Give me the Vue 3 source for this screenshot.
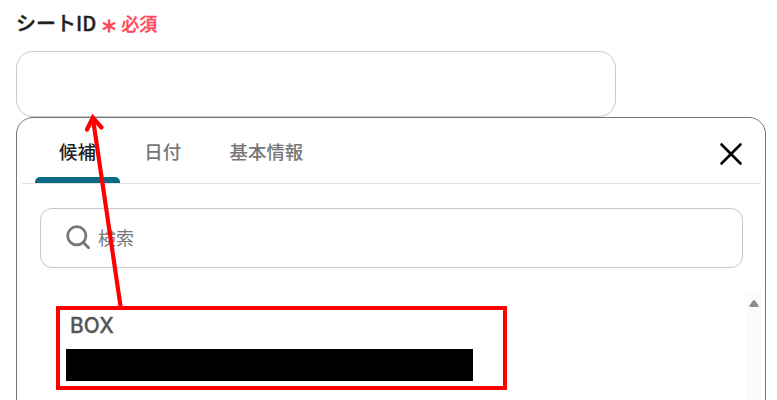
<template>
  <div class="page">
    <div class="label">
      <span class="name">シートID</span>
      <svg class="star" width="14" height="16" viewBox="0 0 14 16">
        <path d="M7 1.5V14.5M1 4.8L13 11.2M13 4.8L1 11.2" />
      </svg>
      <span class="required">必須</span>
    </div>
    <input v-model="sheetId" class="field" type="text" />
    <div class="panel">
      <div class="tabs">
        <button
          v-for="tab in tabs"
          :key="tab"
          class="tab"
          :class="{ active: tab === current }"
          @click="current = tab"
        >{{ tab }}</button>
        <button class="close">
          <svg width="24" height="24" viewBox="0 0 24 24"><path d="M2.5 2.5L21.5 21.5M21.5 2.5L2.5 21.5" /></svg>
        </button>
      </div>
      <div class="search">
        <svg width="26" height="26" viewBox="0 0 26 26">
          <circle cx="11.8" cy="10.8" r="9.1" />
          <path d="M18.3 17.5L23.6 22.8" />
        </svg>
        <input v-model="query" type="text" placeholder="検索" />
      </div>
      <div class="list">
        <div class="item">
          <div class="title">BOX</div>
          <div class="mask"></div>
        </div>
        <div class="scroll">
          <svg width="10" height="8" viewBox="0 0 10 8"><path d="M3.8.8Q5-.4 6.2.8L9.2 5Q10 7 8.5 7H1.5Q0 7 .8 5Z" /></svg>
        </div>
      </div>
    </div>
    <svg class="arrow" width="777" height="400" viewBox="0 0 777 400">
      <path d="M120.8 308L92.8 117.5M87 129.5L92.8 117.5L101.5 127.5" />
    </svg>
    <div class="frame"></div>
  </div>
</template>
<script setup>
import { ref } from 'vue'
const tabs = ['候補', '日付', '基本情報']
const current = ref('候補')
const sheetId = ref('')
const query = ref('')
</script>
<style>
body { margin: 0; background: #fff; overflow: hidden; }
</style>
<style scoped>
.page { position: relative; box-sizing: border-box; width: 777px; height: 400px; padding-left: 16px; overflow: hidden; font-family: Inter, "Noto Sans CJK JP", sans-serif; }
.page * { box-sizing: border-box; }
button, input { font: inherit; border: 0; padding: 0; margin: 0; background: none; outline: none; }
svg { display: block; fill: none; flex: none; }
.label { display: flex; align-items: center; height: 51px; padding-bottom: 5px; }
.name { margin-bottom: 2px; font-size: 20px; font-weight: 500; font-family: "Noto Sans CJK JP", sans-serif; color: #222; -webkit-text-stroke: 0.4px #222; }
.star { margin: 5px 5px 0 6px; stroke: #ff4658; stroke-width: 2.4; }
.required { font-size: 18px; font-weight: 500; color: #ff4658; -webkit-text-stroke: 0.3px #ff4658; }
.field { display: block; width: 600px; height: 66px; border: 1px solid #c8c8c8; border-radius: 17px; padding: 0 16px; }
.panel { width: 750px; height: 320px; border: 1px solid #777; border-radius: 17px 17px 0 0; background: #fff; padding: 0 4px 0 5px; }
.tabs { display: flex; height: 66px; border-bottom: 1px solid #e2e2e2; padding: 0 18px 0 13px; }
.tab { position: relative; padding: 0 24.5px 0 24px; font-size: 18.4px; font-weight: 500; color: #777; height: 66px; }
.tab.active { color: #222; }
.tab.active::after { content: ""; position: absolute; left: 0; right: 0; top: 59px; height: 6px; background: #0b6b85; border-radius: 5px 5px 0 0; }
.close { margin-left: auto; padding-top: 7px; }
.close path { stroke: #000; stroke-width: 2.6; stroke-linecap: round; }
.search { display: flex; align-items: center; width: 703px; height: 60px; margin: 24px 0 0 18px; border: 1px solid #c8c8c8; border-radius: 12px; padding-left: 24px; }
.search svg { stroke: #777; stroke-width: 2.8; stroke-linecap: round; }
.search input { flex: 1; height: 56px; margin-left: 7px; font-size: 18px; }
.search input::placeholder { color: #777; opacity: 1; }
.list { display: flex; justify-content: space-between; height: 108px; margin-top: 24px; }
.item { padding: 20px 0 0 44px; }
.title { margin-left: 4px; height: 37px; line-height: 27px; font-size: 20.8px; font-weight: 500; color: #555; letter-spacing: 0.2px; -webkit-text-stroke: 0.3px #555; }
.mask { width: 407px; height: 32px; background: #000; }
.scroll { width: 15px; background: #fbfbfb; padding: 8px 0 0 2.5px; }
.scroll path { fill: #8b8b8b; }
.arrow { position: absolute; left: 0; top: 0; pointer-events: none; }
.arrow path { stroke: #f00; stroke-width: 4.2; stroke-linecap: round; stroke-linejoin: miter; }
.frame { position: absolute; left: 56px; top: 306px; width: 451px; height: 84px; border: 4px solid #f00; pointer-events: none; }
</style>
